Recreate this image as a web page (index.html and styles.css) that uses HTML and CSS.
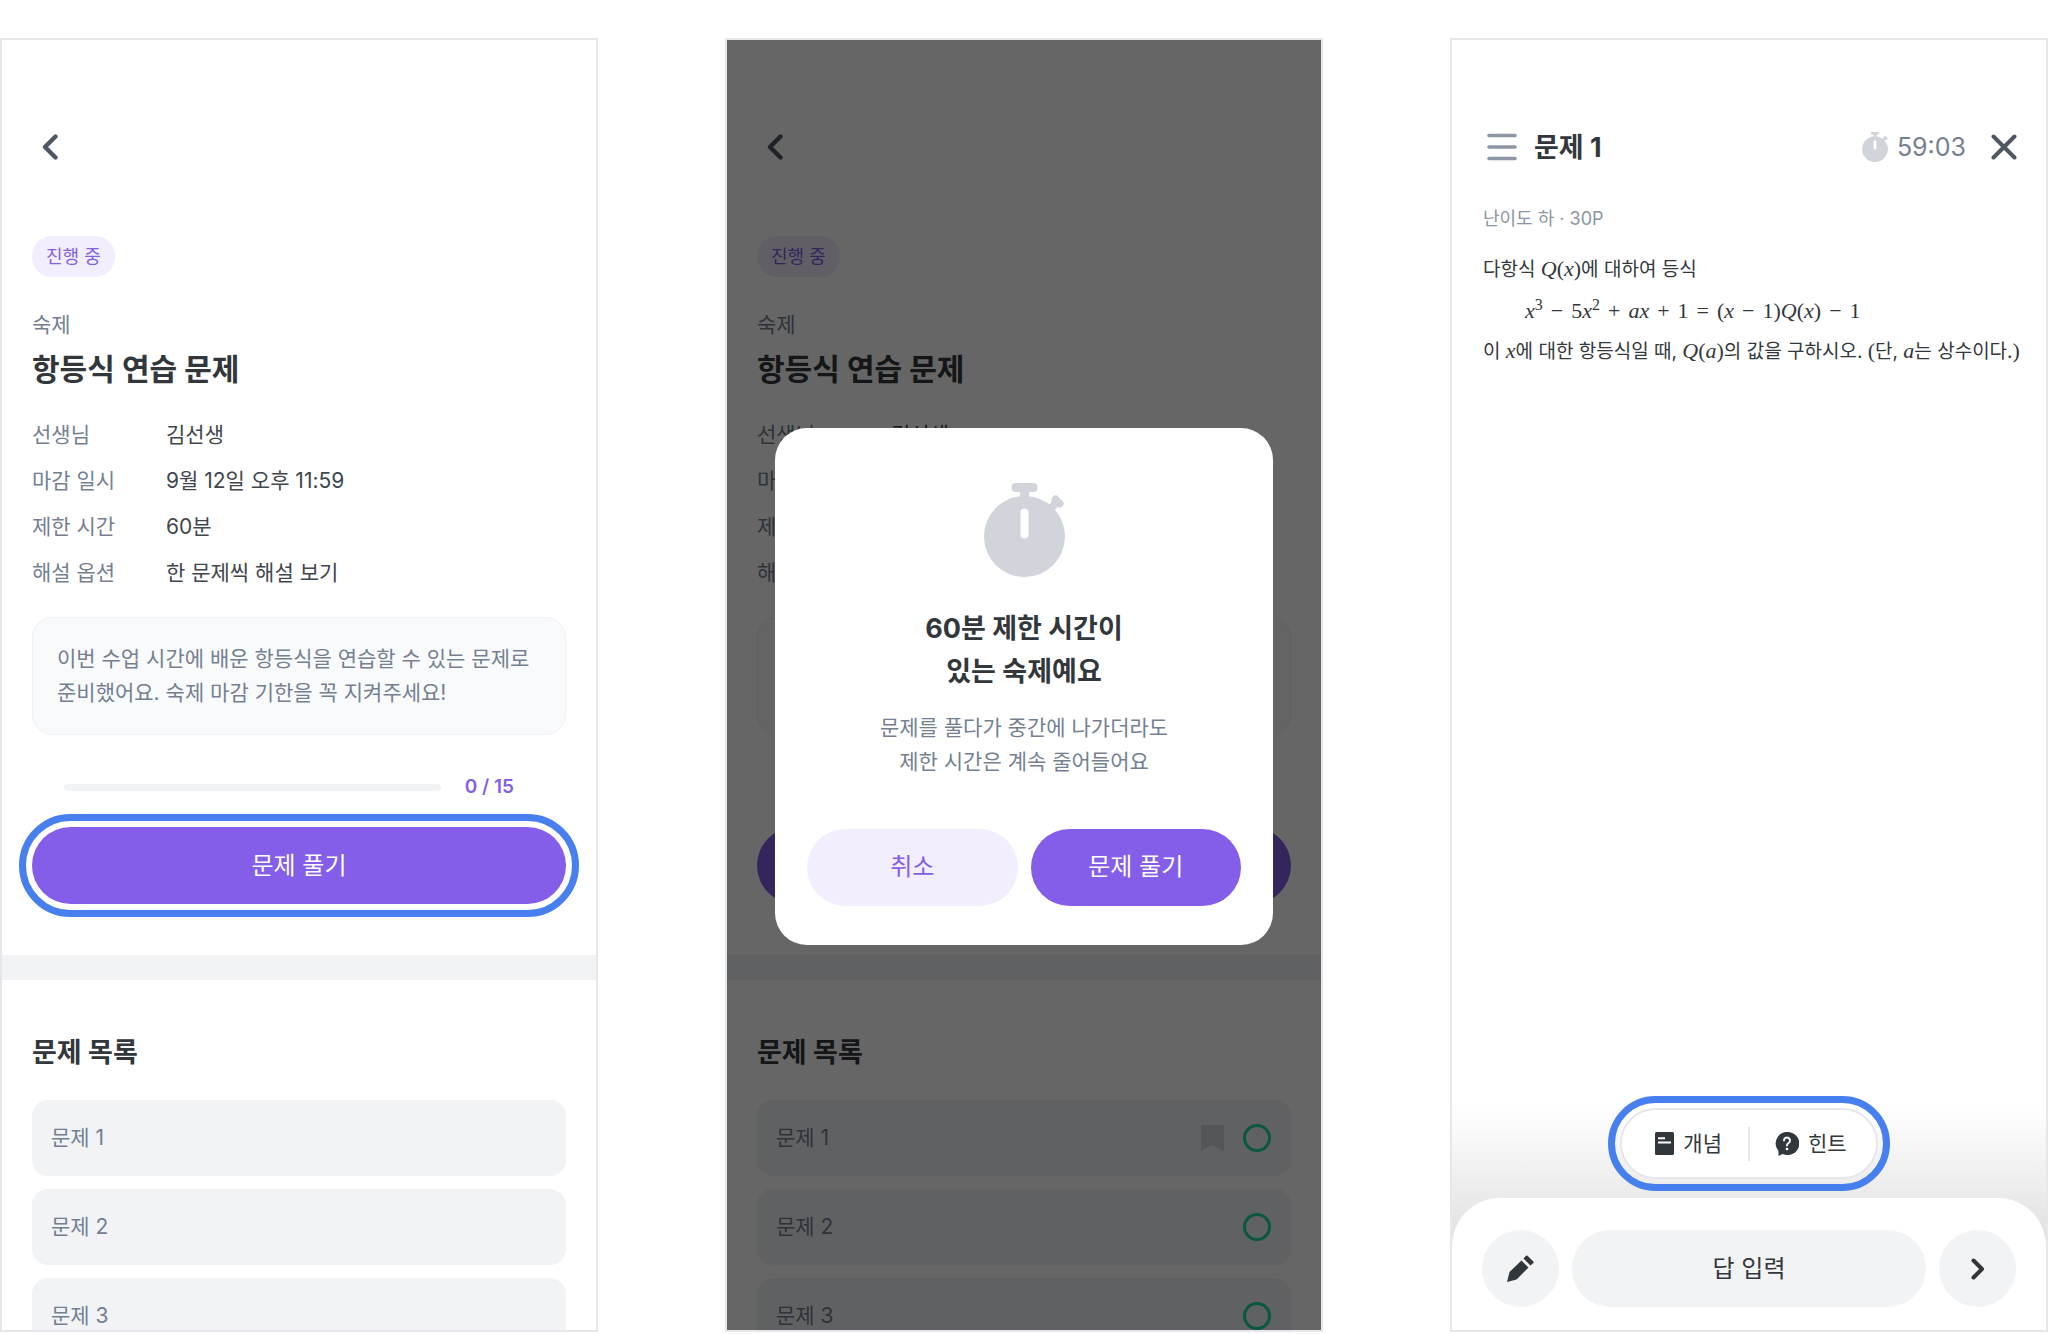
FILE: index.html
```html
<!DOCTYPE html>
<html lang="ko">
<head>
    <meta charset="UTF-8">
    <meta name="viewport" content="width=device-width, initial-scale=1.0">
    <title>숙제 풀기</title>
    <link rel="stylesheet" href="styles.css">
</head>
<body>
    <!-- Shared icons -->
    <svg class="sprite" aria-hidden="true">
        <symbol id="icon-back" viewBox="0 0 16 26">
            <path d="M13.5 2.5L3 13l10.5 10.5" fill="none" stroke="currentColor" stroke-width="4.4" stroke-linecap="round" stroke-linejoin="round"/>
        </symbol>
        <symbol id="icon-stopwatch" viewBox="0 0 81 94">
            <circle cx="40.5" cy="53.5" r="40.5" fill="#d1d5db"/>
            <rect x="27.5" y="0" width="26" height="9" rx="4" fill="#d1d5db"/>
            <rect x="36" y="6" width="9" height="12" fill="#d1d5db"/>
            <path d="M65 27L71 21" stroke="#d1d5db" stroke-width="8"/>
            <path d="M71.5 16.5L75.5 20.5" stroke="#d1d5db" stroke-width="8" stroke-linecap="round"/>
            <rect x="36.5" y="25.5" width="8" height="30" rx="4" fill="#fff"/>
        </symbol>
    </svg>

    <main class="screens">
        <!-- Homework detail -->
        <section class="screen">
            <header class="topbar">
                <button class="icon-button" aria-label="뒤로"><svg class="icon-back"><use href="#icon-back"/></svg></button>
            </header>
            <div class="summary">
                <span class="badge">진행 중</span>
                <p class="kind">숙제</p>
                <h1>항등식 연습 문제</h1>
                <dl class="info">
                    <dt>선생님</dt><dd>김선생</dd>
                    <dt>마감 일시</dt><dd>9월 12일 오후 11:59</dd>
                    <dt>제한 시간</dt><dd>60분</dd>
                    <dt>해설 옵션</dt><dd>한 문제씩 해설 보기</dd>
                </dl>
                <p class="note">이번 수업 시간에 배운 항등식을 연습할 수 있는 문제로 준비했어요. 숙제 마감 기한을 꼭 지켜주세요!</p>
                <div class="progress-row">
                    <progress value="0" max="15" aria-label="진행률"></progress>
                    <span>0 / 15</span>
                </div>
                <button class="button primary focused">문제 풀기</button>
            </div>
            <div class="problems">
                <h2>문제 목록</h2>
                <ul>
                    <li><a href="#">문제 1</a></li>
                    <li><a href="#">문제 2</a></li>
                    <li><a href="#">문제 3</a></li>
                </ul>
            </div>
        </section>

        <!-- Time limit dialog -->
        <section class="screen">
            <header class="topbar">
                <button class="icon-button" aria-label="뒤로"><svg class="icon-back"><use href="#icon-back"/></svg></button>
            </header>
            <div class="summary">
                <span class="badge">진행 중</span>
                <p class="kind">숙제</p>
                <h1>항등식 연습 문제</h1>
                <dl class="info">
                    <dt>선생님</dt><dd>김선생</dd>
                    <dt>마감 일시</dt><dd></dd>
                    <dt>제한 시간</dt><dd></dd>
                    <dt>해설 옵션</dt><dd></dd>
                </dl>
                <p class="note"><br><br></p>
                <div class="progress-row"></div>
                <button class="button primary" aria-label="문제 풀기"></button>
            </div>
            <div class="problems">
                <h2>문제 목록</h2>
                <ul>
                    <li><a href="#">문제 1
                        <svg class="bookmark" viewBox="0 0 23 26"><path d="M1 0h21a1 1 0 0 1 1 1v25l-11.5-6L0 26V1a1 1 0 0 1 1-1z" fill="#d1d5db"/></svg>
                        <i class="ring"></i></a></li>
                    <li><a href="#">문제 2 <i class="ring"></i></a></li>
                    <li><a href="#">문제 3 <i class="ring"></i></a></li>
                </ul>
            </div>
            <div class="overlay">
                <div class="dialog" role="dialog" aria-labelledby="dialogTitle">
                    <svg class="dialog-icon"><use href="#icon-stopwatch"/></svg>
                    <h2 id="dialogTitle">60분 제한 시간이<br>있는 숙제예요</h2>
                    <p>문제를 풀다가 중간에 나가더라도<br>제한 시간은 계속 줄어들어요</p>
                    <div class="dialog-actions">
                        <button class="button secondary">취소</button>
                        <button class="button primary">문제 풀기</button>
                    </div>
                </div>
            </div>
        </section>

        <!-- Problem view -->
        <section class="screen">
            <header class="topbar">
                <button class="icon-button" aria-label="메뉴">
                    <svg class="icon-menu" viewBox="0 0 30 28"><path d="M2 2.5h26M2 14h26M2 25.5h26" stroke="#8d96a5" stroke-width="3.6" stroke-linecap="round"/></svg>
                </button>
                <h2>문제 1</h2>
                <svg class="timer-icon"><use href="#icon-stopwatch"/></svg>
                <span class="timer">59:03</span>
                <button class="icon-button" aria-label="닫기">
                    <svg class="icon-close" viewBox="0 0 26 26"><path d="M2.5 2.5l21 21M23.5 2.5l-21 21" stroke="currentColor" stroke-width="4" stroke-linecap="round"/></svg>
                </button>
            </header>
            <div class="problem">
                <p class="meta">난이도 하 · 30P</p>
                <p>다항식 <span class="math"><i>Q</i>(<i>x</i>)</span>에 대하여 등식</p>
                <p class="equation math"><i>x</i><sup>3</sup><b>−</b>5<i>x</i><sup>2</sup><b>+</b><i>ax</i><b>+</b>1<b>=</b>(<i>x</i><b>−</b>1)<i>Q</i>(<i>x</i>)<b>−</b>1</p>
                <p>이 <span class="math"><i>x</i></span>에 대한 항등식일 때, <span class="math"><i>Q</i>(<i>a</i>)</span>의 값을 구하시오. <span class="math">(</span>단, <span class="math"><i>a</i></span>는 상수이다.<span class="math">)</span></p>
            </div>
            <div class="dock">
                <div class="help focused">
                    <button>
                        <svg class="icon-book" viewBox="0 0 19 23"><rect width="19" height="23" rx="1.5" fill="currentColor"/><path d="M3 6.2h7M3 10.5h13" stroke="#fff" stroke-width="2"/></svg>
                        개념
                    </button>
                    <button>
                        <svg class="icon-hint" viewBox="0 0 24 24"><path d="M12 0a12 11.5 0 1 1-4.500 22L3.500 24V19A11.500 11.500 0 0 1 12 0z" fill="currentColor"/><path d="M9 8.500a3 3 0 1 1 4.600 2.500c-1.100.700-1.600 1.200-1.600 2.500" fill="none" stroke="#fff" stroke-width="1.900" stroke-linecap="round"/><circle cx="12" cy="17" r="1.300" fill="#fff"/></svg>
                        힌트
                    </button>
                </div>
                <div class="sheet">
                    <button class="button round" aria-label="필기">
                        <svg class="icon-pencil" viewBox="0 0 27 27"><path d="M0 27l2.500-10L14.500 5.500l7 7L9.500 24.500zM16.500 3.500L19 .800q.800-.800 1.600 0L26.300 6.400q.800.800 0 1.600L23.500 10.500z" fill="currentColor"/></svg>
                    </button>
                    <button class="button answer">답 입력</button>
                    <button class="button round" aria-label="다음">
                        <svg class="icon-next" viewBox="0 0 14 22"><path d="M2.500 2.500L11 11l-8.500 8.500" fill="none" stroke="currentColor" stroke-width="4" stroke-linecap="round" stroke-linejoin="round"/></svg>
                    </button>
                </div>
            </div>
        </section>
    </main>
</body>
</html>
```
FILE: styles.css
```css
* {
    box-sizing: border-box;
}
body {
    margin: 0;
    background-color: #fff;
    color: #32373c;
    font-family: Inter, "Noto Sans CJK KR", sans-serif;
    font-size: 21px;
    line-height: 34px;
}
h1, h2, p, ul, dl, dd {
    margin: 0;
    padding: 0;
}
button {
    padding: 0;
    border: none;
    background: none;
    color: inherit;
    font: inherit;
    cursor: pointer;
}
svg {
    display: block;
    flex: none;
}
.sprite {
    position: absolute;
    width: 0;
    height: 0;
}
.screens {
    display: grid;
    grid-template-columns: repeat(3, 1fr);
    gap: 127px;
    height: 100vh;
    padding: 38px 0 2px;
}
.screen {
    position: relative;
    display: flex;
    flex-direction: column;
    overflow: hidden;
    border: 2px solid #e5e7eb;
}
.topbar {
    display: flex;
    flex: none;
    align-items: center;
    height: 64px;
    margin-top: 75px;
    padding: 0 29px 0 35px;
}
.topbar h2 {
    flex: 1;
    margin-left: 17px;
    padding-top: 2px;
    font-size: 27px;
}
.icon-button {
    color: #4e5761;
}
.icon-back {
    width: 16px;
    height: 26px;
    margin-left: 5px;
}
.icon-menu {
    width: 30px;
    height: 28px;
}
.icon-close {
    width: 26px;
    height: 26px;
}
.timer-icon {
    width: 26px;
    height: 30px;
}
.timer {
    margin: 0 25px 0 9px;
    color: #748091;
    font-size: 25px;
}

/* Homework detail */
.summary {
    display: flex;
    flex: none;
    flex-direction: column;
    align-items: stretch;
    padding: 57px 30px 51px;
    border-bottom: 25px solid #f1f3f5;
}
.badge {
    align-self: flex-start;
    padding: 4px 14px 3px;
    border-radius: 20px;
    background-color: #f2eefd;
    color: #845ee9;
    font-size: 18px;
}
.kind {
    margin-top: 31px;
    color: #748091;
}
h1 {
    margin-top: 6px;
    font-size: 30px;
    line-height: 42px;
}
.info {
    display: grid;
    grid-template-columns: 134px 1fr;
    row-gap: 12px;
    margin-top: 28px;
}
.info dt {
    color: #748091;
}
.info dd {
    color: #40464e;
}
.note {
    margin-top: 27px;
    padding: 24px;
    border: 1px solid #f0f1f4;
    border-radius: 20px;
    background-color: #f9fafb;
    color: #748091;
}
.progress-row {
    display: flex;
    align-items: center;
    gap: 24px;
    height: 34px;
    margin: 35px 52px 23px 32px;
    color: #845ee9;
    font-size: 19px;
    font-weight: 600;
}
progress {
    flex: 1;
    min-width: 0;
    height: 7px;
    border: none;
    border-radius: 4px;
    background-color: #f2f3f5;
    appearance: none;
    overflow: hidden;
}
progress::-webkit-progress-bar {
    background-color: #f2f3f5;
}
progress::-webkit-progress-value {
    background-color: #845ee9;
}
.button {
    height: 77px;
    border-radius: 39px;
    font-size: 24px;
}
.primary {
    background-color: #845ee9;
    color: #fff;
}
.secondary {
    background-color: #f2eefd;
    color: #845ee9;
}
.focused {
    outline: 7px solid #4780ee;
    outline-offset: 6px;
}
.problems {
    flex: none;
    padding: 56px 30px;
}
.problems h2 {
    margin-bottom: 30px;
    font-size: 27px;
}
.problems ul {
    display: flex;
    flex-direction: column;
    gap: 13px;
    list-style: none;
}
.problems a {
    display: flex;
    align-items: center;
    gap: 19px;
    height: 76px;
    padding: 0 20px 0 19px;
    border-radius: 16px;
    background-color: #f1f3f5;
    color: #748091;
    text-decoration: none;
}
.bookmark {
    width: 23px;
    height: 26px;
    margin-left: auto;
}
.ring {
    width: 28px;
    height: 28px;
    border: 3px solid #17d8a2;
    border-radius: 50%;
    margin-left: auto;
}
.bookmark + .ring {
    margin-left: 0;
}

/* Dialog */
.overlay {
    position: absolute;
    inset: 0;
    display: flex;
    align-items: center;
    padding: 2px 48px 0;
    background-color: rgba(0, 0, 0, 0.6);
}
.dialog {
    flex: 1;
    padding: 55px 32px 39px;
    border-radius: 32px;
    background-color: #fff;
    text-align: center;
}
.dialog-icon {
    width: 81px;
    height: 94px;
    margin: 0 auto 30px;
}
.dialog h2 {
    margin-bottom: 18px;
    font-size: 27px;
    line-height: 43px;
}
.dialog p {
    color: #748091;
}
.dialog-actions {
    display: grid;
    grid-template-columns: 1fr 1fr;
    gap: 13px;
    margin-top: 50px;
}

/* Problem view */
.problem {
    flex: 1;
    padding: 19px 24px 0 31px;
    font-size: 19px;
    line-height: 41px;
    white-space: nowrap;
}
.problem .meta {
    margin-bottom: 10px;
    color: #8b95a1;
    font-size: 18px;
}
.math {
    font-family: "Liberation Serif", serif;
    font-size: 22px;
    line-height: 1;
}
.equation {
    padding-left: 42px;
    line-height: 41px;
}
.equation b {
    margin: 0 8px;
    font-weight: 400;
}
.equation sup {
    font-size: 16px;
    line-height: 1;
}
.dock {
    background: linear-gradient(#fff, #e2e2e2 128px);
}
.help {
    display: flex;
    align-items: center;
    width: fit-content;
    height: 71px;
    margin: 2px auto 19px;
    border: 2px solid #e5e7eb;
    border-radius: 36px;
    background-color: #fff;
    outline-offset: 5px;
}
.help button {
    display: flex;
    align-items: center;
    gap: 9px;
    padding: 0 26px 0 33px;
}
.help button + button {
    padding: 0 29px 0 25px;
    border-left: 2px solid #e5e7eb;
}
.icon-book {
    width: 19px;
    height: 23px;
}
.icon-hint {
    width: 24px;
    height: 24px;
}
.sheet {
    display: flex;
    gap: 13px;
    padding: 32px 30px 23px;
    border-radius: 48px 48px 0 0;
    background-color: #fff;
}
.sheet .button {
    background-color: #f2f3f5;
}
.round {
    display: flex;
    flex: none;
    align-items: center;
    justify-content: center;
    width: 77px;
}
.answer {
    flex: 1;
}
.icon-pencil {
    width: 27px;
    height: 27px;
}
.icon-next {
    width: 14px;
    height: 22px;
}
```
